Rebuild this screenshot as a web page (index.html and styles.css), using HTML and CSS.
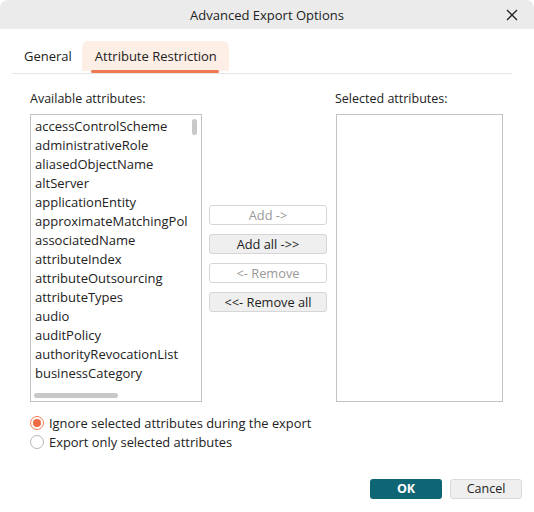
FILE: index.html
```html
<!DOCTYPE html>
<html>
<head>
<meta charset="utf-8">
<link rel="stylesheet" href="styles.css">
</head>
<body>
<div class="dialog">
  <div class="titlebar">
    <span class="title">Advanced Export Options</span>
    <svg class="close" width="12" height="12" viewBox="0 0 12 12"><path d="M1 1L11 11M11 1L1 11" stroke="#222" stroke-width="1.3" fill="none"/></svg>
  </div>
  <div class="tabs">
    <div class="tab">General</div>
    <div class="tab active">Attribute Restriction</div>
  </div>
  <div class="content">
    <div class="col left">
      <div class="label">Available attributes:</div>
      <div class="listbox">
        <div class="items">
          <div class="item">accessControlScheme</div>
          <div class="item">administrativeRole</div>
          <div class="item">aliasedObjectName</div>
          <div class="item">altServer</div>
          <div class="item">applicationEntity</div>
          <div class="item">approximateMatchingPol</div>
          <div class="item">associatedName</div>
          <div class="item">attributeIndex</div>
          <div class="item">attributeOutsourcing</div>
          <div class="item">attributeTypes</div>
          <div class="item">audio</div>
          <div class="item">auditPolicy</div>
          <div class="item">authorityRevocationList</div>
          <div class="item">businessCategory</div>
        </div>
        <div class="vthumb"></div>
        <div class="hthumb"></div>
      </div>
    </div>
    <div class="buttons">
      <div class="btn disabled">Add -&gt;</div>
      <div class="btn">Add all -&gt;&gt;</div>
      <div class="btn disabled">&lt;- Remove</div>
      <div class="btn">&lt;&lt;- Remove all</div>
    </div>
    <div class="col right">
      <div class="label">Selected attributes:</div>
      <div class="listbox sel"></div>
    </div>
  </div>
  <div class="radios">
    <label class="radio"><span class="dot on"></span>Ignore selected attributes during the export</label>
    <label class="radio"><span class="dot"></span>Export only selected attributes</label>
  </div>
  <div class="footer">
    <div class="ok">OK</div>
    <div class="cancel">Cancel</div>
  </div>
</div>
</body>
</html>
```
FILE: styles.css
```css
html, body { margin: 0; padding: 0; background: #fff; }
body { font-family: "Open Sans", "Liberation Sans", sans-serif; font-size: 12.5px; color: #222; width: 534px; height: 512px; overflow: hidden; }
.dialog { width: 534px; height: 512px; background: #fff; border-radius: 8px; overflow: hidden; position: relative; }
.titlebar { height: 29px; background: #ebebeb; display: flex; align-items: center; justify-content: center; position: relative; }
.title { font-size: 13px; color: #222; }
.close { position: absolute; right: 16px; top: 9px; }
.tabs { display: flex; margin: 12px 22px 0 12px; border-bottom: 1px solid #e6e6e6; height: 32px; }
.tab { padding: 0 10px 0 12px; height: 30px; line-height: 31px; font-size: 13px; color: #222; }
.tab.active { background: #fdeee6; border-radius: 6px 6px 0 0; position: relative; padding: 0 12px 0 13px; }
.tab.active::after { content: ""; position: absolute; left: 9px; right: 10px; bottom: -2px; height: 3px; background: #ef7a52; border-radius: 2px; }
.content { display: flex; padding: 18px 0 0 30px; }
.col { display: flex; flex-direction: column; }
.label { height: 14px; line-height: 14px; margin-bottom: 8px; font-size: 12.5px; }
.listbox { width: 170px; height: 286px; border: 1px solid #c3c3c3; position: relative; overflow: hidden; }
.items { padding: 2px 0 0 4px; }
.item { height: 19px; line-height: 19px; white-space: nowrap; font-size: 13px; }
.vthumb { position: absolute; left: 161px; top: 4px; width: 5px; height: 16px; background: #c8c8c8; border-radius: 3px; }
.hthumb { position: absolute; left: 3px; top: 278px; width: 84px; height: 5px; background: #c8c8c8; border-radius: 3px; }
.buttons { display: flex; flex-direction: column; gap: 9px; margin: 113px 0 0 7px; }
.btn { width: 116px; height: 18px; border: 1px solid #d6d6d6; border-radius: 3px; background: #efefef; text-align: center; line-height: 18px; font-size: 12.8px; color: #222; }
.btn.disabled { background: #fff; color: #999; }
.right { margin-left: 9px; }
.right .label { margin-left: -1px; }
.listbox.sel { width: 165px; }
.radios { display: flex; flex-direction: column; padding: 14px 0 0 30px; gap: 5px; }
.radio { display: flex; align-items: center; height: 14px; line-height: 14px; font-size: 12.9px; }
.dot { width: 12px; height: 12px; border: 1px solid #b5b5b5; border-radius: 50%; margin-right: 5px; box-sizing: content-box; background: #fff; position: relative; }
.dot.on { border-color: #ef7a52; }
.dot.on::after { content: ""; position: absolute; left: 2px; top: 2px; width: 8px; height: 8px; border-radius: 50%; background: #ef6a42; }
.footer { display: flex; justify-content: flex-end; gap: 8px; padding: 30px 12px 0 0; }
.ok { width: 72px; height: 20px; background: #0e6674; border-radius: 3px; color: #fff; font-weight: bold; text-align: center; line-height: 20px; font-size: 12.5px; }
.cancel { width: 70px; height: 18px; background: #efefef; border: 1px solid #dadada; border-radius: 3px; text-align: center; line-height: 18px; font-size: 12.5px; }
```
